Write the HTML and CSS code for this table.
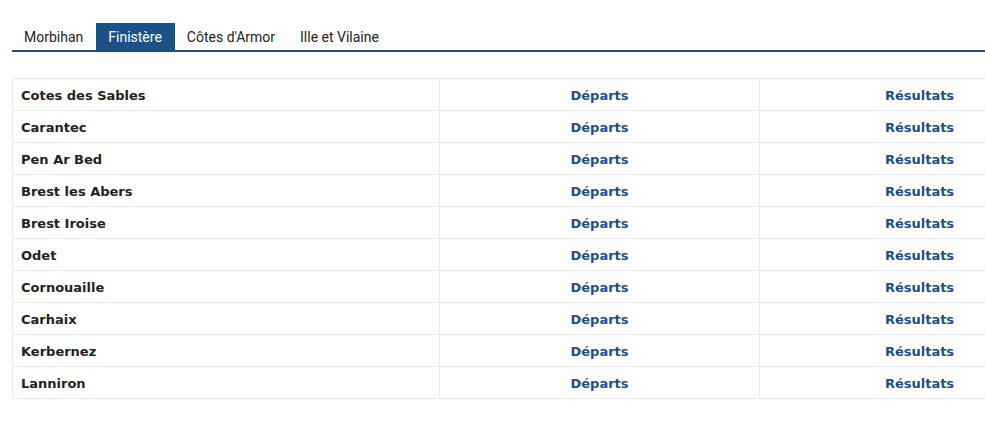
FILE: index.html
```html
<!DOCTYPE html>
<html lang="fr">
<head>
<meta charset="utf-8">
<link rel="stylesheet" href="styles.css">
</head>
<body>
<div class="page">
  <ul class="tabs">
    <li class="tab">Morbihan</li>
    <li class="tab active">Finistère</li>
    <li class="tab">Côtes d'Armor</li>
    <li class="tab">Ille et Vilaine</li>
  </ul>
  <table class="clubs">
    <tbody>
      <tr><td class="name">Cotes des Sables</td><td class="link">Départs</td><td class="link">Résultats</td></tr>
      <tr><td class="name">Carantec</td><td class="link">Départs</td><td class="link">Résultats</td></tr>
      <tr><td class="name">Pen Ar Bed</td><td class="link">Départs</td><td class="link">Résultats</td></tr>
      <tr><td class="name">Brest les Abers</td><td class="link">Départs</td><td class="link">Résultats</td></tr>
      <tr><td class="name">Brest Iroise</td><td class="link">Départs</td><td class="link">Résultats</td></tr>
      <tr><td class="name">Odet</td><td class="link">Départs</td><td class="link">Résultats</td></tr>
      <tr><td class="name">Cornouaille</td><td class="link">Départs</td><td class="link">Résultats</td></tr>
      <tr><td class="name">Carhaix</td><td class="link">Départs</td><td class="link">Résultats</td></tr>
      <tr><td class="name">Kerbernez</td><td class="link">Départs</td><td class="link">Résultats</td></tr>
      <tr><td class="name">Lanniron</td><td class="link">Départs</td><td class="link">Résultats</td></tr>
    </tbody>
  </table>
</div>
</body>
</html>
```
FILE: styles.css
```css
html, body {
  margin: 0;
  padding: 0;
  background: #fff;
}
.page {
  width: 985px;
  overflow: hidden;
  padding: 23px 0 0 12px;
  box-sizing: border-box;
  height: 426px;
}
.tabs {
  list-style: none;
  margin: 0;
  padding: 0;
  display: flex;
  border-bottom: 2px solid #1b5186;
  width: 1000px;
  font-family: Roboto, sans-serif;
  font-size: 14px;
  color: #222;
}
.tab {
  height: 27px;
  line-height: 28px;
  padding: 0 13px 0 12px;
}
.tab.active {
  background: #1b5186;
  color: #fff;
}
.clubs {
  margin-top: 26px;
  border-collapse: collapse;
  width: 1067px;
  table-layout: fixed;
  font-family: "DejaVu Sans", Verdana, sans-serif;
  font-size: 13px;
  font-weight: bold;
}
.clubs td {
  height: 32px;
  padding: 1px 8px 0;
  border: 1px solid #ebebeb;
  box-sizing: border-box;
}
.clubs td.name {
  width: 427px;
  color: #222;
}
.clubs td.link {
  width: 320px;
  text-align: center;
  color: #1b5186;
}
```
